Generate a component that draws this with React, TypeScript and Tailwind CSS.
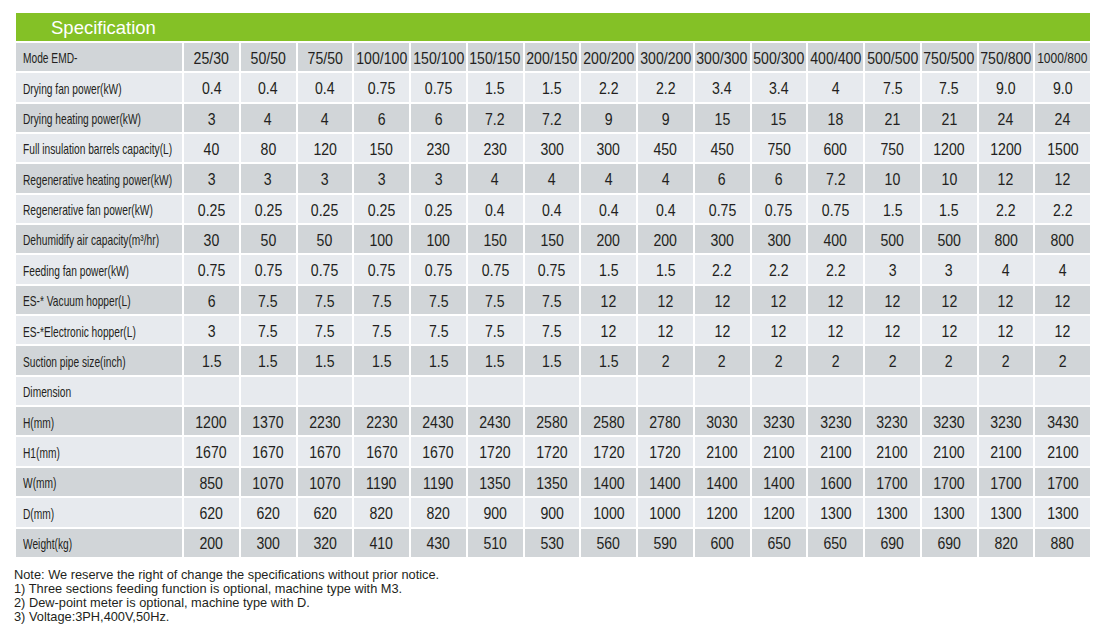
const models = ['25/30','50/50','75/50','100/100','150/100','150/150','200/150','200/200','300/200','300/300','500/300','400/400','500/500','750/500','750/800','1000/800'];

const rows: { label: string; values: string[] }[] = [
  { label: 'Drying fan power(kW)', values: ['0.4','0.4','0.4','0.75','0.75','1.5','1.5','2.2','2.2','3.4','3.4','4','7.5','7.5','9.0','9.0'] },
  { label: 'Drying heating power(kW)', values: ['3','4','4','6','6','7.2','7.2','9','9','15','15','18','21','21','24','24'] },
  { label: 'Full insulation barrels capacity(L)', values: ['40','80','120','150','230','230','300','300','450','450','750','600','750','1200','1200','1500'] },
  { label: 'Regenerative heating power(kW)', values: ['3','3','3','3','3','4','4','4','4','6','6','7.2','10','10','12','12'] },
  { label: 'Regenerative fan power(kW)', values: ['0.25','0.25','0.25','0.25','0.25','0.4','0.4','0.4','0.4','0.75','0.75','0.75','1.5','1.5','2.2','2.2'] },
  { label: 'Dehumidify air capacity(m³/hr)', values: ['30','50','50','100','100','150','150','200','200','300','300','400','500','500','800','800'] },
  { label: 'Feeding fan power(kW)', values: ['0.75','0.75','0.75','0.75','0.75','0.75','0.75','1.5','1.5','2.2','2.2','2.2','3','3','4','4'] },
  { label: 'ES-* Vacuum hopper(L)', values: ['6','7.5','7.5','7.5','7.5','7.5','7.5','12','12','12','12','12','12','12','12','12'] },
  { label: 'ES-*Electronic hopper(L)', values: ['3','7.5','7.5','7.5','7.5','7.5','7.5','12','12','12','12','12','12','12','12','12'] },
  { label: 'Suction pipe size(inch)', values: ['1.5','1.5','1.5','1.5','1.5','1.5','1.5','1.5','2','2','2','2','2','2','2','2'] },
  { label: 'Dimension', values: Array(16).fill('') },
  { label: 'H(mm)', values: ['1200','1370','2230','2230','2430','2430','2580','2580','2780','3030','3230','3230','3230','3230','3230','3430'] },
  { label: 'H1(mm)', values: ['1670','1670','1670','1670','1670','1720','1720','1720','1720','2100','2100','2100','2100','2100','2100','2100'] },
  { label: 'W(mm)', values: ['850','1070','1070','1190','1190','1350','1350','1400','1400','1400','1400','1600','1700','1700','1700','1700'] },
  { label: 'D(mm)', values: ['620','620','620','820','820','900','900','1000','1000','1200','1200','1300','1300','1300','1300','1300'] },
  { label: 'Weight(kg)', values: ['200','300','320','410','430','510','530','560','590','600','650','650','690','690','820','880'] },
];

const allRows = [{ label: 'Mode EMD-', values: models }, ...rows];

export default function App() {
  return (
    <div className="w-[1107px] h-[631px] bg-white pl-4 pt-[13px] text-[#231f20] font-['Liberation_Sans',Arial,sans-serif]">
      <div className="w-[1074px]">
        <div className="h-[28px] bg-[#84c126] pl-[35px] pt-[1px] flex items-center text-white text-[18.5px]">
          Specification
        </div>
        <div className="mt-[2px] grid grid-cols-[166px_repeat(16,minmax(0,1fr))] auto-rows-[28.35px] gap-[2px]">
          {allRows.map((row, i) => {
            const bg = i % 2 === 0 ? 'bg-[#d1d5d8]' : 'bg-[#e7eaee]';
            return [
              <div key={row.label} className={`${bg} flex items-center pl-[7px] pt-[3px] whitespace-nowrap overflow-hidden`}>
                <span className="inline-block origin-left scale-x-[0.68] text-[15px]">{row.label}</span>
              </div>,
              ...row.values.map((v, j) => (
                <div key={row.label + j} className={`${bg} flex items-center justify-center pt-[3px] whitespace-nowrap`}>
                  <span
                    className={`inline-block scale-x-[0.83] ${i === 0 && j === 15 ? 'text-[14.5px]' : 'text-[17px]'}`}
                  >
                    {v}
                  </span>
                </div>
              )),
            ];
          })}
        </div>
      </div>
      <div className="mt-[11px] -ml-[2px] text-[12.8px] leading-[14px]">
        <p>Note: We reserve the right of change the specifications without prior notice.</p>
        <p>1) Three sections feeding function is optional, machine type with M3.</p>
        <p>2) Dew-point meter is optional, machine type with D.</p>
        <p>3) Voltage:3PH,400V,50Hz.</p>
      </div>
    </div>
  );
}
